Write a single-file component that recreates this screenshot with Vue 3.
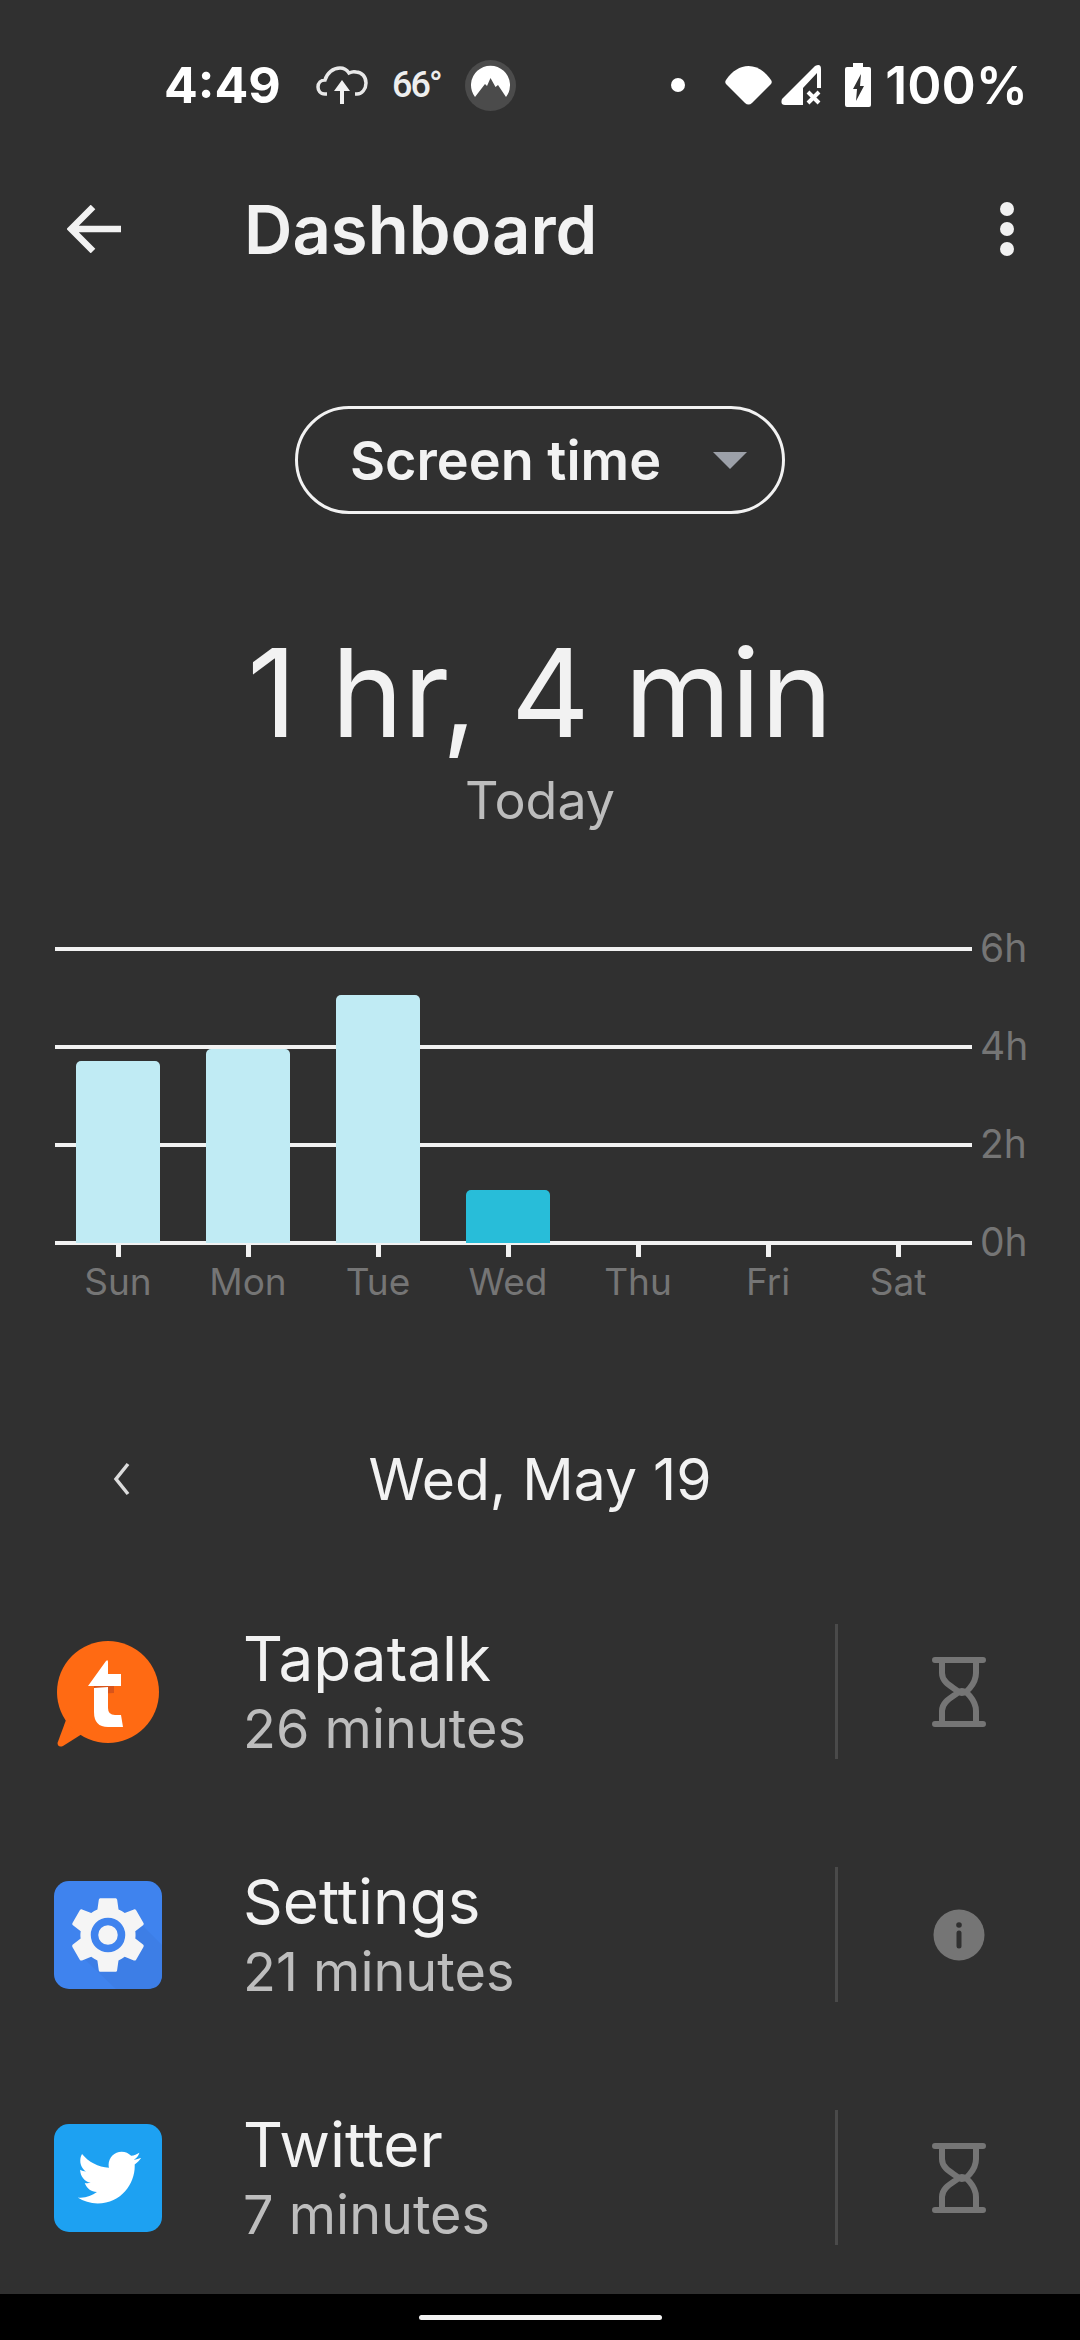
<template>
  <div class="screen">
    <div class="status">
      <div class="status-left">
        <span class="clock">4:49</span>
        <svg class="cloud" width="52" height="38" viewBox="0 0 52 38">
          <path d="M11 28H9C4 28 2 24 2 21 2 17 5 14 9 14 11 7 17 2 24 2 28 2 31 4 33 7 35 6 37 5 40 6 46 6 50 11 50 17 50 23 46 28 41 28H39" fill="none" stroke="#e8e8e8" stroke-width="3.5" />
          <path d="M26 14L34 25H28V38H24V25H18Z" fill="#f2f2f2" />
        </svg>
        <span class="temp">66°</span>
        <svg class="nord" width="51" height="51" viewBox="0 0 51 51">
          <circle cx="25.5" cy="25.5" r="25.5" fill="#4b4b4b" />
          <path d="M10 37A19.5 19.5 0 1 1 41 37L33 25 30.5 27 25.5 18 22 26 20 24Z" fill="#fff" />
        </svg>
      </div>
      <div class="status-right">
        <span class="dot"></span>
        <svg width="47" height="39" viewBox="0 0 47 39">
          <path d="M1 14C7 5 15 0 23.5 0S40 5 46 14C47 15.5 47 16.5 46 18L27 37Q23.5 40 20 37L1 18C0 16.5 0 15.5 1 14Z" fill="#fff" />
        </svg>
        <svg class="signal" width="41" height="40" viewBox="0 0 41 40">
          <path d="M1 34L34 1Q40-2 40 4V23H36V8L22 23V40H4Q-1 40 1 34Z" fill="#fff" />
          <path d="M27 27L38 38M38 27L27 38" stroke="#fff" stroke-width="4" />
        </svg>
        <svg class="battery" width="26" height="44" viewBox="0 0 26 44">
          <path d="M8 0H18V4H24Q26 4 26 6V42Q26 44 24 44H2Q0 44 0 42V6Q0 4 2 4H8Z" fill="#fff" />
          <path d="M16 11L8 26H12L11 38 19 23H15Z" fill="#303030" />
        </svg>
        <span class="pct">100%</span>
      </div>
    </div>

    <div class="toolbar">
      <svg class="back" width="56" height="48" viewBox="0 0 56 48">
        <path d="M54 24H4M26 2L4 24 26 46" fill="none" stroke="#f2f2f2" stroke-width="6.5" />
      </svg>
      <span class="title">Dashboard</span>
      <div class="menu"><i></i><i></i><i></i></div>
    </div>

    <div class="pill-wrap">
      <div class="pill">
        <span>Screen time</span>
        <i class="caret"></i>
      </div>
    </div>

    <div class="total">1 hr, 4 min</div>
    <div class="today">Today</div>

    <div class="chart">
      <div class="plot">
        <div class="line" v-for="h in hours" :key="h">
          <span>{{ h }}</span>
        </div>
        <div class="bars">
          <div class="col" v-for="d in days" :key="d.name">
            <div
              v-if="d.height"
              class="bar"
              :class="{ current: d.current }"
              :style="{ height: d.height + 'px' }"
            ></div>
          </div>
        </div>
      </div>
      <div class="axis">
        <div class="day" v-for="d in days" :key="d.name">
          <i></i>
          <span>{{ d.name }}</span>
        </div>
      </div>
    </div>

    <div class="date-row">
      <svg class="prev" width="18" height="36" viewBox="0 0 18 36">
        <path d="M15 3L3 18 15 33" fill="none" stroke="#dcdcdc" stroke-width="3.5" />
      </svg>
      <span>Wed, May 19</span>
    </div>

    <div class="app-row" v-for="app in apps" :key="app.name">
      <svg v-if="app.name === 'Tapatalk'" class="app-icon" viewBox="14 16 108 108">
        <path d="M26 98L17.5 121Q18 126 23 124L42 112Z" fill="#ff6a13" />
        <circle cx="68" cy="70" r="51" fill="#ff6a13" />
        <path d="M54 64H74V71L54 72Z" fill="#d9541a" />
        <path d="M66 39Q68 37 68 40V52H81V64H48Z" fill="#fff" />
        <path d="M54 66L68 65V86Q68 93 75 93H81L83 105H68Q54 105 54 90Z" fill="#fff" />
      </svg>
      <svg v-else-if="app.name === 'Settings'" class="app-icon" viewBox="0 0 108 108">
        <rect width="108" height="108" rx="15" fill="#3f83ee" />
        <path d="M84 40L108 64V93Q108 108 93 108H62L22 70Z" fill="#3d7ee6" />
        <g transform="translate(8 8) scale(3.83)">
          <path fill="#f5f5f5" d="M19.14 12.94c.04-.3.06-.61.06-.94 0-.32-.02-.64-.07-.94l2.03-1.58c.18-.14.23-.41.12-.61l-1.92-3.32c-.12-.22-.37-.29-.59-.22l-2.39.96c-.5-.38-1.03-.7-1.62-.94l-.36-2.54c-.04-.24-.24-.41-.48-.41h-3.84c-.24 0-.43.17-.47.41l-.36 2.54c-.59.24-1.13.57-1.62.94l-2.39-.96c-.22-.08-.47 0-.59.22L2.74 8.87c-.12.21-.08.47.12.61l2.03 1.58c-.05.3-.09.63-.09.94s.02.64.07.94l-2.03 1.58c-.18.14-.23.41-.12.61l1.92 3.32c.12.22.37.29.59.22l2.39-.96c.5.38 1.03.7 1.62.94l.36 2.54c.05.24.24.41.48.41h3.84c.24 0 .44-.17.47-.41l.36-2.54c.59-.24 1.13-.56 1.62-.94l2.39.96c.22.08.47 0 .59-.22l1.92-3.32c.12-.22.07-.47-.12-.61l-2.01-1.58z" />
        </g>
        <circle cx="54" cy="54" r="13.5" fill="#f5f5f5" stroke="#3f83ee" stroke-width="7.5" />
      </svg>
      <svg v-else class="app-icon" viewBox="0 0 108 108">
        <rect width="108" height="108" rx="15" fill="#1da1f2" />
        <g transform="translate(21 20) scale(2.8)">
          <path fill="#fff" d="M23.643 4.937c-.835.37-1.732.62-2.675.733.962-.576 1.7-1.49 2.048-2.578-.9.534-1.897.922-2.958 1.13-.85-.904-2.06-1.47-3.4-1.47-2.572 0-4.658 2.086-4.658 4.66 0 .364.042.718.12 1.06-3.873-.195-7.304-2.05-9.602-4.868-.4.69-.63 1.49-.63 2.342 0 1.616.823 3.043 2.072 3.878-.764-.025-1.482-.234-2.11-.583v.06c0 2.257 1.605 4.14 3.737 4.568-.392.106-.803.162-1.227.162-.3 0-.593-.028-.877-.082.593 1.85 2.313 3.198 4.352 3.234-1.595 1.25-3.604 1.995-5.786 1.995-.376 0-.747-.022-1.112-.065 2.062 1.323 4.51 2.093 7.14 2.093 8.57 0 13.255-7.098 13.255-13.254 0-.2-.005-.402-.014-.602.91-.658 1.7-1.477 2.323-2.41z" />
        </g>
      </svg>
      <div class="app-text">
        <div class="app-name">{{ app.name }}</div>
        <div class="app-time">{{ app.time }}</div>
      </div>
      <div class="app-action">
        <svg v-if="app.action === 'timer'" width="54" height="70" viewBox="0 0 54 70">
          <path d="M3 3H51M3 67H51M10 3V16C10 26 21 30 27 35S44 26 44 16V3M10 67V54C10 44 21 40 27 35S44 44 44 54V67" fill="none" stroke="#757575" stroke-width="6" stroke-linecap="round" />
        </svg>
        <svg v-else width="52" height="52" viewBox="0 0 52 52">
          <circle cx="26" cy="26" r="25.5" fill="#757575" />
          <circle cx="26" cy="16" r="2.8" fill="#303030" />
          <path d="M26 24V37" stroke="#303030" stroke-width="5" stroke-linecap="round" />
        </svg>
      </div>
    </div>

    <div class="navbar"><i></i></div>
  </div>
</template>

<script setup>
const hours = ['6h', '4h', '2h', '0h']

const days = [
  { name: 'Sun', height: 182 },
  { name: 'Mon', height: 194 },
  { name: 'Tue', height: 248 },
  { name: 'Wed', height: 53, current: true },
  { name: 'Thu', height: 0 },
  { name: 'Fri', height: 0 },
  { name: 'Sat', height: 0 }
]

const apps = [
  { name: 'Tapatalk', time: '26 minutes', action: 'timer' },
  { name: 'Settings', time: '21 minutes', action: 'info' },
  { name: 'Twitter', time: '7 minutes', action: 'timer' }
]
</script>

<style>
html,
body {
  background: #303030;
}
</style>

<style scoped>
.screen {
  position: relative;
  width: 1080px;
  height: 2340px;
  overflow: hidden;
  background: #303030;
  color: #f2f2f2;
  font-family: Inter, "Liberation Sans", sans-serif;
}

.status {
  display: flex;
  align-items: center;
  justify-content: space-between;
  height: 170px;
  padding: 0 52px 0 164px;
  box-sizing: border-box;
  color: #fff;
}

.status-left,
.status-right {
  display: flex;
  align-items: center;
}

.clock {
  font-size: 50px;
  font-weight: 700;
  width: 152px;
}

.temp {
  margin-left: 24px;
  width: 73px;
  font-family: Roboto, sans-serif;
  font-size: 36px;
  font-weight: 500;
  letter-spacing: -2px;
  color: #eee;
}

.dot {
  width: 14px;
  height: 14px;
  border-radius: 50%;
  background: #fff;
  margin-right: 40px;
}

.signal {
  margin-left: 9px;
}

.battery {
  margin-left: 23px;
}

.pct {
  margin-left: 14px;
  font-size: 52px;
  font-weight: 600;
}

.toolbar {
  display: flex;
  align-items: center;
  height: 118px;
  padding: 0 67px;
}

.title {
  margin-left: 121px;
  font-size: 67px;
  font-weight: 600;
}

.menu {
  display: flex;
  flex-direction: column;
  gap: 6px;
  margin-left: auto;
  margin-right: -1px;
}

.menu i {
  width: 14px;
  height: 14px;
  border-radius: 50%;
  background: #f2f2f2;
}

.pill-wrap {
  display: flex;
  justify-content: center;
  padding-top: 118px;
}

.pill {
  display: flex;
  align-items: center;
  box-sizing: border-box;
  width: 490px;
  height: 108px;
  padding-left: 52px;
  border: 3px solid #f2f2f2;
  border-radius: 54px;
  font-size: 54px;
  font-weight: 600;
}

.caret {
  margin-left: 52px;
  width: 0;
  height: 0;
  border-left: 17px solid transparent;
  border-right: 17px solid transparent;
  border-top: 17px solid #9ca0a8;
}

.total {
  margin-top: 114px;
  text-align: center;
  font-size: 122px;
  line-height: 130px;
}

.today {
  margin-top: 13px;
  text-align: center;
  font-size: 52px;
  line-height: 60px;
  color: #bdbdbd;
}

.chart {
  margin-top: 116px;
  padding-left: 55px;
}

.plot {
  position: relative;
  display: flex;
  flex-direction: column;
  justify-content: space-between;
  width: 917px;
  height: 298px;
}

.line {
  position: relative;
  height: 4px;
  background: #f2f2f2;
}

.line span {
  position: absolute;
  left: 925px;
  top: -21px;
  font-size: 39px;
  line-height: 44px;
  color: #757575;
}

.bars {
  position: absolute;
  left: -2px;
  bottom: 2px;
  display: flex;
  width: 910px;
}

.col {
  display: flex;
  justify-content: center;
  align-items: flex-end;
  width: 130px;
}

.bar {
  width: 84px;
  border-radius: 5px 5px 0 0;
  background: #c0ebf4;
}

.bar.current {
  background: #28bdd9;
}

.axis {
  display: flex;
  width: 910px;
  margin-left: -2px;
}

.day {
  display: flex;
  flex-direction: column;
  align-items: center;
  width: 130px;
  font-size: 37px;
  line-height: 44px;
  color: #757575;
}

.day i {
  width: 5px;
  height: 12px;
  background: #f2f2f2;
  margin-bottom: 3px;
}

.date-row {
  position: relative;
  display: flex;
  align-items: center;
  justify-content: center;
  height: 80px;
  margin-top: 135px;
  margin-bottom: 51px;
  font-size: 57px;
}

.prev {
  position: absolute;
  left: 113px;
}

.app-row {
  display: flex;
  align-items: center;
  height: 243px;
  padding-left: 54px;
}

.app-icon {
  flex: none;
  width: 108px;
  height: 108px;
  overflow: visible;
}

.app-text {
  margin-left: 81px;
  padding-top: 3px;
}

.app-name {
  font-size: 62px;
  line-height: 72px;
}

.app-time {
  font-size: 54px;
  line-height: 68px;
  color: #bdbdbd;
}

.app-action {
  display: flex;
  align-items: center;
  justify-content: center;
  box-sizing: border-box;
  width: 245px;
  height: 135px;
  margin-left: auto;
  border-left: 3px solid #4a4a4a;
}

.navbar {
  position: absolute;
  left: 0;
  right: 0;
  bottom: 0;
  display: flex;
  justify-content: center;
  align-items: center;
  height: 46px;
  background: #000;
}

.navbar i {
  width: 243px;
  height: 5px;
  border-radius: 3px;
  background: #f2f2f2;
}
</style>
